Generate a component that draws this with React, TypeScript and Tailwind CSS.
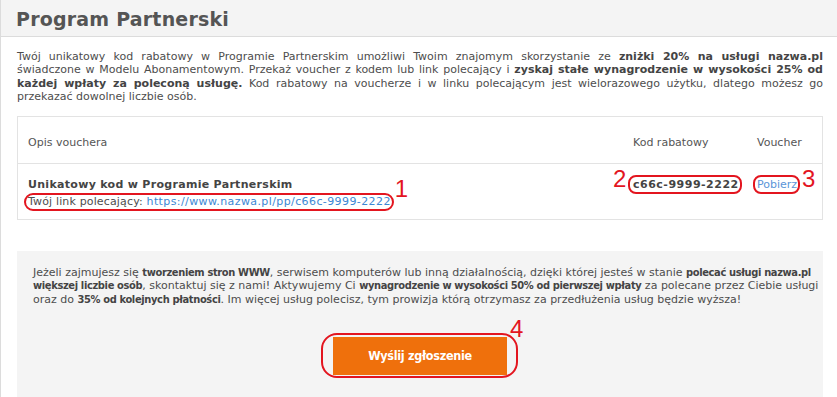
import React from "react";

const J = "whitespace-nowrap text-justify [text-align-last:justify]";
const B = "font-bold text-[#444]";
const B2 = "font-['DejaVu_Sans_Condensed',sans-serif] font-bold tracking-[-0.35px] text-[#444]";

function Oval({ children, className, num, numClass }: { children: React.ReactNode; className: string; num: string; numClass: string }) {
  return (
    <span className="relative inline-block">
      {children}
      <span className={"pointer-events-none absolute border-2 border-[#e3151f] " + className} />
      <span className={"pointer-events-none absolute font-['Liberation_Sans',sans-serif] text-[24px] leading-none text-[#e3151f] " + numClass}>{num}</span>
    </span>
  );
}

export default function App() {
  return (
    <div className="w-[837px] h-[397px] overflow-hidden bg-white border-l border-[#dcdcdc] font-['DejaVu_Sans',sans-serif] text-[11px] text-[#4d4d4d]">
      <div className="h-[37px] bg-[#f4f4f4] border-b border-[#dcdcdc] pl-[15px] flex items-center">
        <h1 className="text-[19px] font-bold text-[#555] leading-none pt-[2px] tracking-[0.2px]">Program Partnerski</h1>
      </div>
      <div className="px-[16px]">
        <div className="pt-[13px] leading-[13.4px] w-[806px]">
          <div className={J}>
            Twój unikatowy kod rabatowy w Programie Partnerskim umożliwi Twoim znajomym skorzystanie ze <span className={B}>zniżki 20% na usługi nazwa.pl</span>
          </div>
          <div className={J}>
            świadczone w Modelu Abonamentowym. Przekaż voucher z kodem lub link polecający i <span className={B}>zyskaj stałe wynagrodzenie w wysokości 25% od</span>
          </div>
          <div className={J}>
            <span className={B}>każdej wpłaty za poleconą usługę.</span> Kod rabatowy na voucherze i w linku polecającym jest wielorazowego użytku, dlatego możesz go
          </div>
          <div>przekazać dowolnej liczbie osób.</div>
        </div>

        <div className="mt-[12px] w-[806px] border border-[#e3e3e3]">
          <div className="grid grid-cols-[615px_124px_1fr] h-[47px] items-center border-b border-[#e3e3e3] text-[#555]">
            <div className="pl-[10px] pt-[8px]">Opis vouchera</div>
            <div className="pt-[8px]">Kod rabatowy</div>
            <div className="pt-[8px]">Voucher</div>
          </div>
          <div className="grid grid-cols-[615px_124px_1fr] h-[55px] pt-[12px]">
            <div className="pl-[10px] leading-[17px]">
              <div className="font-bold text-[#444] tracking-[0.3px]">Unikatowy kod w Programie Partnerskim</div>
              <Oval className="-left-[4px] -right-[3px] top-[0px] bottom-[-1px] rounded-[9px]" num="1" numClass="left-[calc(100%+4px)] -top-[16px]">
                <span className="tracking-[0.15px]">Twój link polecający: </span>
                <a className="text-[#3b87d4] tracking-[0.4px]">https://www.nazwa.pl/pp/c66c-9999-2222</a>
              </Oval>
            </div>
            <div className="leading-[17px]">
              <Oval className="-left-[5px] -right-[3px] top-[-1px] bottom-[-1px] rounded-[8px]" num="2" numClass="-left-[20px] -top-[9px]">
                <span className="font-bold text-[#444] tracking-[0.5px]">c66c-9999-2222</span>
              </Oval>
            </div>
            <div className="leading-[17px]">
              <Oval className="-left-[4px] -right-[3px] top-[-1px] bottom-[-1px] rounded-[8px]" num="3" numClass="left-[calc(100%+5px)] -top-[9px]">
                <a className="text-[#5b95d8]">Pobierz</a>
              </Oval>
            </div>
          </div>
        </div>

        <div className="mt-[31px] w-[806px] h-[200px] bg-[#f4f4f4] px-[16px] pt-[15px]">
          <div className="leading-[13.5px]">
            <div className={J}>
              Jeżeli zajmujesz się <span className={B2}>tworzeniem stron WWW</span>, serwisem komputerów lub inną działalnością, dzięki której jesteś w stanie <span className={B2}>polecać usługi nazwa.pl</span>
            </div>
            <div className={J}>
              <span className={B2}>większej liczbie osób</span>, skontaktuj się z nami! Aktywujemy Ci <span className={B2}>wynagrodzenie w wysokości 50% od pierwszej wpłaty</span> za polecane przez Ciebie usługi
            </div>
            <div className="whitespace-nowrap">
              oraz do <span className={B2}>35% od kolejnych płatności</span>. Im więcej usług polecisz, tym prowizja którą otrzymasz za przedłużenia usług będzie wyższa!
            </div>
          </div>
          <div className="flex justify-center mt-[31px]">
            <Oval className="-left-[12px] -right-[11px] -top-[4px] -bottom-[3px] rounded-[16px]" num="4" numClass="left-[calc(100%+3px)] -top-[20px]">
              <button className="w-[174px] h-[38px] bg-[#ef700c] text-white font-['DejaVu_Sans_Condensed',sans-serif] font-bold text-[12.5px] tracking-[-0.3px]">
                Wyślij zgłoszenie
              </button>
            </Oval>
          </div>
        </div>
      </div>
    </div>
  );
}
